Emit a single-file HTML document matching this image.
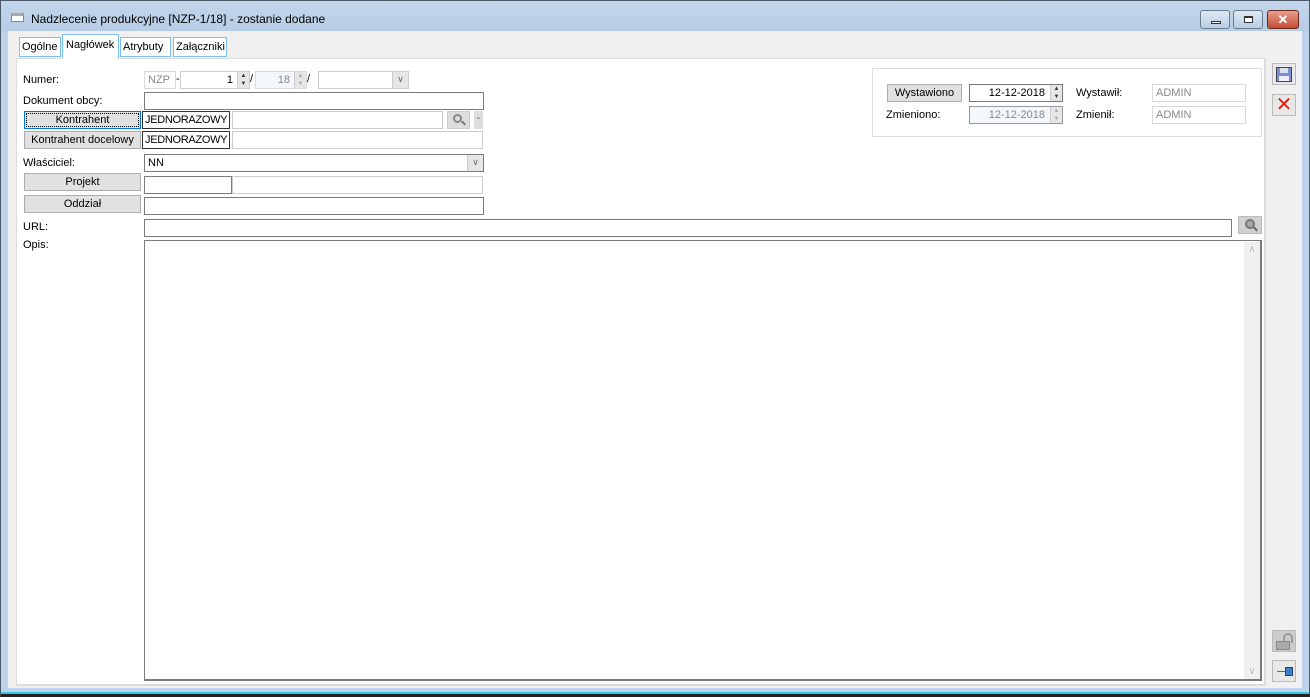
<!DOCTYPE html>
<html><head><meta charset="utf-8"><style>
*{box-sizing:border-box;margin:0;padding:0}
body{width:1310px;height:697px;overflow:hidden;background:#fff;font-family:"Liberation Sans",sans-serif;font-size:11px;color:#000;position:relative}
.a{position:absolute}
.in{position:absolute;background:#fff;border:1px solid #7a7a7a;height:18px;line-height:16px;padding:0 3px;white-space:nowrap;overflow:hidden}
.dis{border-color:#d9d9d9;color:#888}
.btn{position:absolute;background:#e1e1e1;border:1px solid #adadad;height:18px;line-height:16px;text-align:center}
.lbl{position:absolute;line-height:14px}
.tab{position:absolute;border:1px solid #7fbfef;background:#fff;height:20px;line-height:18px;padding:0 2px;top:37px}
.spin{position:absolute;right:0;top:0;width:12px;height:16px;background:#e6e6e6;border-left:1px solid #ccc;font-size:6px;line-height:8px;text-align:center;color:#333}
</style></head><body>
<div class="a" style="left:0;top:0;width:1310px;height:697px;background:#bdd3ea;border:1px solid #4a5a6a;border-bottom:3px solid #222"></div>
<div class="a" style="left:1px;top:1px;width:1308px;height:30px;background:linear-gradient(#c4d6ea,#b6cde6)"></div>
<div class="a" style="left:1px;top:692px;width:1308px;height:2px;background:#36c3e0"></div>
<div class="a" style="left:11px;top:13px;width:13px;height:9px;border:1px solid #888;background:#fff;border-top:3px solid #aaa"></div>
<div class="lbl" style="left:31px;top:12px;font-size:12px">Nadzlecenie produkcyjne [NZP-1/18] - zostanie dodane</div>
<div class="a" style="left:1200px;top:10px;width:30px;height:19px;border:1px solid #6c7c90;border-radius:3px;background:linear-gradient(#dfe9f5,#b9cde4)"><div class="a" style="left:10px;top:10px;width:10px;height:3px;background:#fff;border:1px solid #333"></div></div>
<div class="a" style="left:1233px;top:10px;width:30px;height:19px;border:1px solid #6c7c90;border-radius:3px;background:linear-gradient(#dfe9f5,#b9cde4)"><div class="a" style="left:10px;top:5px;width:9px;height:7px;background:#fff;border:1px solid #333;border-top-width:2px"></div></div>
<div class="a" style="left:1267px;top:10px;width:32px;height:19px;border:1px solid #6a2a20;border-radius:3px;background:linear-gradient(#e8a090,#c44a33);color:#fff;font-weight:bold;text-align:center;line-height:17px;font-size:13px">✕</div>
<div class="a" style="left:8px;top:31px;width:1294px;height:657px;background:#f0f0f0"></div>
<div class="tab" style="left:19px;width:42px">Ogólne</div>
<div class="tab" style="left:62px;top:34px;height:24px;padding-top:1px;width:57px;padding-left:3px">Nagłówek</div>
<div class="tab" style="left:120px;width:51px">Atrybuty</div>
<div class="tab" style="left:173px;width:54px">Załączniki</div>
<div class="a" style="left:16px;top:58px;width:1250px;height:628px;background:#fff;border:1px solid #dcdcdc;border-right:2px solid #dcdcdc;border-bottom:2px solid #dcdcdc"></div>
<div class="a" style="left:63px;top:57px;width:55px;height:2px;background:#fff"></div>

<div class="lbl" style="left:23px;top:73px">Numer:</div>
<div class="in dis" style="left:144px;top:71px;width:32px">NZP</div>
<div class="lbl" style="left:176px;top:72px">-</div>
<div class="in" style="left:180px;top:71px;width:70px;text-align:right;padding-right:16px;border-color:#ccc">1<div class="spin">▲<br>▼</div></div>
<div class="lbl" style="left:250px;top:72px">/</div>
<div class="in dis" style="left:255px;top:71px;width:52px;text-align:right;padding-right:16px;background:#f4f8fc">18<div class="spin" style="color:#aaa">▲<br>▼</div></div>
<div class="lbl" style="left:307px;top:72px">/</div>
<div class="in" style="left:318px;top:71px;width:91px;border-color:#ccc"><div class="spin" style="width:16px;height:16px;line-height:14px;font-size:9px;color:#666">∨</div></div>

<div class="lbl" style="left:23px;top:94px">Dokument obcy:</div>
<div class="in" style="left:144px;top:92px;width:340px"></div>

<div class="btn" style="left:24px;top:111px;width:117px;border:1px solid #0078d7;outline:1px dotted #000;outline-offset:-3px">Kontrahent</div>
<div class="in" style="left:142px;top:111px;width:88px;border-color:#333;padding:0 2px;letter-spacing:-0.3px">JEDNORAZOWY</div>
<div class="in" style="left:232px;top:111px;width:211px;border-color:#ccc"></div>
<div class="a" style="left:447px;top:111px;width:23px;height:18px;background:#ddd;border:1px solid #ccc"><div class="a" style="left:5px;top:2px;width:9px;height:9px;border:2px solid #888;border-radius:50%"></div><div class="a" style="left:13px;top:10px;width:5px;height:2px;background:#777;transform:rotate(45deg)"></div></div>
<div class="a" style="left:474px;top:111px;width:9px;height:18px;background:#ddd;text-align:center;line-height:14px;color:#666">-</div>

<div class="btn" style="left:24px;top:131px;width:117px">Kontrahent docelowy</div>
<div class="in" style="left:142px;top:131px;width:88px;border-color:#333;padding:0 2px;letter-spacing:-0.3px">JEDNORAZOWY</div>
<div class="in" style="left:232px;top:131px;width:251px;border-color:#ccc"></div>

<div class="lbl" style="left:23px;top:156px">Właściciel:</div>
<div class="in" style="left:144px;top:154px;width:340px">NN<div class="spin" style="width:16px;line-height:14px;font-size:9px;color:#666">∨</div></div>

<div class="btn" style="left:24px;top:173px;width:117px">Projekt</div>
<div class="in" style="left:144px;top:176px;width:88px"></div>
<div class="in" style="left:232px;top:176px;width:251px;border-color:#ccc"></div>

<div class="btn" style="left:24px;top:195px;width:117px">Oddział</div>
<div class="in" style="left:144px;top:197px;width:340px"></div>

<div class="lbl" style="left:23px;top:220px">URL:</div>
<div class="in" style="left:144px;top:219px;width:1088px"></div>
<div class="a" style="left:1238px;top:216px;width:24px;height:18px;background:#d0d0d0;border:1px solid #bbb"><div class="a" style="left:6px;top:2px;width:10px;height:10px;border:2px solid #777;border-radius:50%;background:#aaa"></div><div class="a" style="left:14px;top:11px;width:5px;height:2px;background:#666;transform:rotate(45deg)"></div></div>

<div class="lbl" style="left:23px;top:238px">Opis:</div>
<div class="a" style="left:144px;top:240px;width:1118px;height:441px;border:1px solid #7a7a7a;border-bottom-width:2px;border-right-width:2px;background:#fff"></div>
<div class="a" style="left:1244px;top:242px;width:16px;height:437px;background:#f0f0f0;color:#bbb;font-size:10px;text-align:center"><div style="margin-top:2px">∧</div><div style="position:absolute;bottom:2px;width:16px">∨</div></div>

<div class="a" style="left:872px;top:68px;width:390px;height:69px;border:1px solid #dcdcdc"></div>
<div class="btn" style="left:887px;top:84px;width:75px">Wystawiono</div>
<div class="in" style="left:969px;top:84px;width:94px;text-align:right;padding-right:17px">12-12-2018<div class="spin">▲<br>▼</div></div>
<div class="lbl" style="left:886px;top:108px">Zmieniono:</div>
<div class="in dis" style="left:969px;top:106px;width:94px;text-align:right;padding-right:17px;border-color:#999;background:#f4f8fc">12-12-2018<div class="spin" style="color:#aaa">▲<br>▼</div></div>
<div class="lbl" style="left:1076px;top:86px">Wystawił:</div>
<div class="in dis" style="left:1152px;top:84px;width:94px">ADMIN</div>
<div class="lbl" style="left:1076px;top:108px">Zmienił:</div>
<div class="in dis" style="left:1152px;top:106px;width:94px">ADMIN</div>

<div class="a" style="left:1272px;top:63px;width:24px;height:22px;border:1px solid #bbb;background:#e8e8e8"><div class="a" style="left:3px;top:3px;width:16px;height:15px;background:#7b8fd0;border:1px solid #445"><div class="a" style="left:3px;top:0;width:8px;height:5px;background:#dde"></div><div class="a" style="left:2px;top:8px;width:10px;height:5px;background:#eef"></div></div></div>
<div class="a" style="left:1272px;top:94px;width:24px;height:22px;border:1px solid #bbb;background:#e8e8e8;color:#e02010;font-size:20px;text-align:center;line-height:20px">✕</div>
<div class="a" style="left:1272px;top:630px;width:24px;height:22px;border:1px solid #bbb;background:#ccc"><div class="a" style="left:3px;top:10px;width:14px;height:9px;background:#aaa;border:1px solid #888"></div><div class="a" style="left:10px;top:2px;width:10px;height:10px;border:2px solid #999;border-bottom:none;border-radius:5px 5px 0 0"></div></div>
<div class="a" style="left:1272px;top:660px;width:24px;height:22px;border:1px solid #bbb;background:#e8e8e8"><div class="a" style="left:4px;top:10px;width:8px;height:1px;background:#666"></div><div class="a" style="left:12px;top:6px;width:8px;height:9px;background:#3a7fd0;border:1px solid #246"></div></div>
</body></html>
